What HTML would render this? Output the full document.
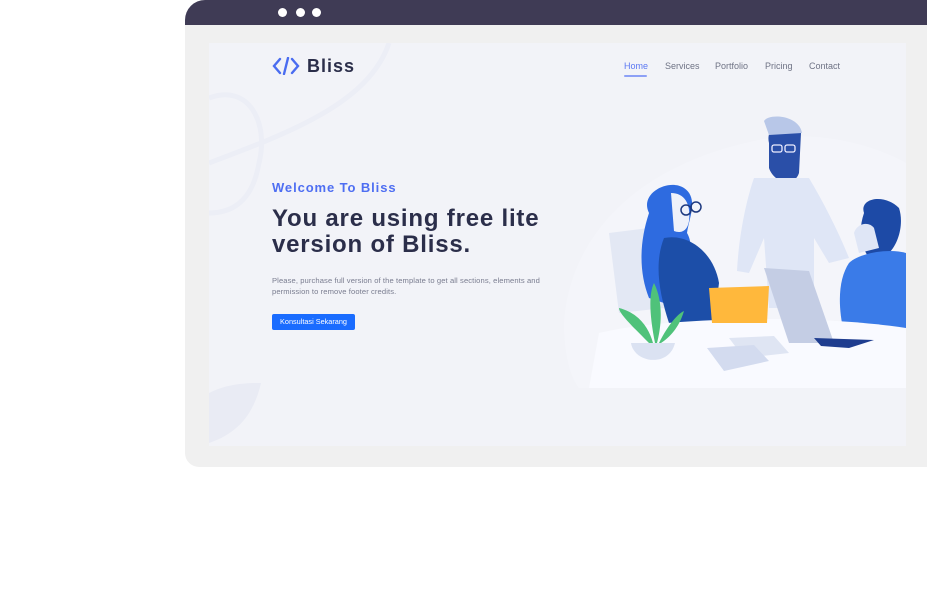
<!DOCTYPE html>
<html><head><meta charset="utf-8"><style>
*{margin:0;padding:0;box-sizing:border-box}
body{width:927px;height:601px;background:#fff;position:relative;overflow:hidden;font-family:"Liberation Sans",sans-serif}
.frame{position:absolute;left:185px;top:0;width:760px;height:467px;background:#f0f0f0;border-radius:20px 0 0 14px;overflow:hidden}
.bar{position:absolute;left:0;top:0;right:0;height:25px;background:#3f3b55}
.dot{position:absolute;top:8px;width:9px;height:9px;border-radius:50%;background:#fff}
.page{position:absolute;left:24px;top:43px;width:697px;height:403px;background:#f2f3f8;overflow:hidden}
.t{position:absolute;white-space:nowrap}
</style></head><body>
<div class="frame">
<div class="bar"><div class="dot" style="left:93px"></div><div class="dot" style="left:111px"></div><div class="dot" style="left:127px"></div></div>
<div class="page">
<svg width="697" height="403" style="position:absolute;left:0;top:0">
<path d="M0 55 C40 40 60 80 50 120 C45 150 30 170 0 170" fill="none" stroke="#eceef6" stroke-width="5"/>
<path d="M0 120 C80 90 160 60 180 0" fill="none" stroke="#eceef6" stroke-width="5"/>
<path d="M0 400 L0 350 C20 340 40 340 52 340 C45 370 30 390 0 400Z" fill="#e9ebf4"/>
<!-- illustration -->
<path d="M355 280 C360 200 420 120 560 95 C640 85 697 120 697 120 L697 345 L370 345 C358 330 355 300 355 280Z" fill="#f4f5fa"/>
<path d="M400 190 L440 185 L455 265 L410 270Z" fill="#e3e8f4"/>
<path d="M440 170 C430 150 460 135 475 145 C490 155 480 175 478 190 C490 210 470 250 455 260 L440 255 C430 230 430 200 440 170Z" fill="#2e6be0"/>
<path d="M462 150 C475 150 482 160 480 178 C478 190 470 190 465 188Z" fill="#eef1fa"/>
<path d="M455 195 C480 190 505 210 510 240 L505 280 L460 280 C450 250 445 220 455 195Z" fill="#1c4ea8"/>
<circle cx="477" cy="167" r="5" fill="none" stroke="#1e3a80" stroke-width="1.5"/>
<circle cx="487" cy="164" r="5" fill="none" stroke="#1e3a80" stroke-width="1.5"/>
<path d="M560 100 C555 80 585 70 592 90 L590 130 C585 145 565 140 560 125Z" fill="#2a4fa8"/>
<path d="M555 78 C560 70 590 72 593 90 L560 92Z" fill="#b8c7e8"/>
<rect x="563" y="102" width="10" height="7" rx="2" fill="none" stroke="#eef" stroke-width="1.3"/>
<rect x="576" y="102" width="10" height="7" rx="2" fill="none" stroke="#eef" stroke-width="1.3"/>
<path d="M545 135 L600 135 C615 160 630 190 640 215 L620 220 L605 195 L605 265 L560 265 L555 195 L540 230 L528 228 C530 190 538 155 545 135Z" fill="#dfe6f6"/>
<path d="M655 170 C650 155 675 150 690 165 C695 180 690 200 680 210 L660 215 C650 200 650 185 655 170Z" fill="#1d4aa6"/>
<path d="M645 190 C648 180 660 178 665 185 L670 205 L650 210Z" fill="#dfe6f6"/>
<path d="M640 220 C650 210 680 205 697 210 L697 290 L635 290 C628 260 630 235 640 220Z" fill="#3a7be8"/>
<path d="M390 290 C450 275 600 270 697 285 L697 345 L380 345Z" fill="#f9faff"/>
<path d="M500 245 L560 243 L558 280 L503 280Z" fill="#ffb83c"/>
<path d="M555 225 L600 228 L625 300 L580 300Z" fill="#c4cde4"/>
<path d="M605 295 L665 297 L640 305 L612 303Z" fill="#1f3d8f"/>
<path d="M520 295 L565 293 L580 310 L535 315Z" fill="#dfe5f3"/>
<path d="M498 305 L545 302 L560 318 L515 328Z" fill="#d3dbef"/>
<path d="M422 300 C425 320 460 325 466 300Z" fill="#dbe2f2"/>
<path d="M440 300 C420 280 410 270 410 265 C430 270 440 285 444 300Z M446 300 C440 270 440 250 445 240 C455 260 452 285 448 300Z M450 300 C460 280 470 270 475 268 C470 285 460 295 452 300Z" fill="#4fc27a"/>
</svg>
<svg class="t" style="left:63px;top:14px" width="28" height="18" viewBox="0 0 28 18"><path d="M8 2 L2 9 L8 16 M20 2 L26 9 L20 16 M16 1 L12 17" fill="none" stroke="#4a6cf0" stroke-width="2.4" stroke-linecap="round"/></svg>
<div class="t" style="left:98px;top:13px;font-size:18px;font-weight:bold;color:#2b2e4a;letter-spacing:1px">Bliss</div>
<div class="t" style="left:415px;top:18px;font-size:9px;color:#5c78f2">Home</div>
<div style="position:absolute;left:415px;top:32px;width:23px;height:2px;background:#8da0f6;border-radius:1px"></div>
<div class="t" style="left:456px;top:18px;font-size:9px;color:#6f7385">Services</div>
<div class="t" style="left:506px;top:18px;font-size:9px;color:#6f7385">Portfolio</div>
<div class="t" style="left:556px;top:18px;font-size:9px;color:#6f7385">Pricing</div>
<div class="t" style="left:600px;top:18px;font-size:9px;color:#6f7385">Contact</div>
<div class="t" style="left:63px;top:137px;font-size:13px;font-weight:bold;color:#4e6ef2;letter-spacing:0.9px">Welcome To Bliss</div>
<div class="t" style="left:63px;top:163px;font-size:24px;font-weight:bold;color:#2b2e4a;line-height:26px;letter-spacing:0.8px">You are using free lite<br>version of Bliss.</div>
<div class="t" style="left:63px;top:232px;font-size:7.6px;color:#7a7d90;line-height:11px;letter-spacing:0.1px">Please, purchase full version of the template to get all sections, elements and<br>permission to remove footer credits.</div>
<div style="position:absolute;left:63px;top:271px;width:83px;height:16px;background:#1a6cff;border-radius:2px;color:#fff;font-size:7.3px;line-height:16px;text-align:center">Konsultasi Sekarang</div>
</div>
</div>
</body></html>
